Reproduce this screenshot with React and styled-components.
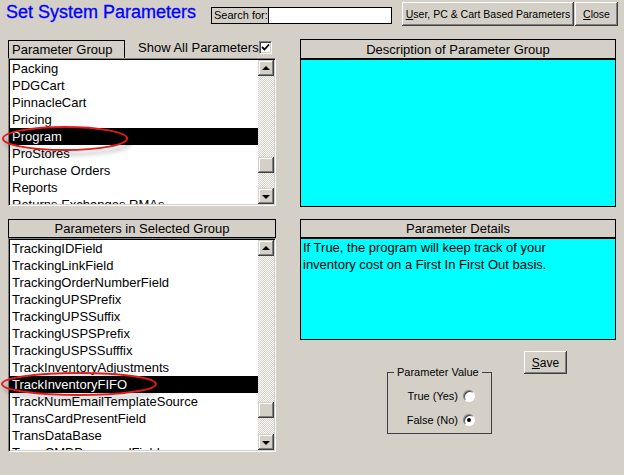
import styled, { createGlobalStyle } from 'styled-components';

const GlobalStyle = createGlobalStyle`
  html, body { margin: 0; padding: 0; background: #d4d0c8; }
  body { font-family: "Liberation Sans", Arial, sans-serif; overflow: hidden; }
`;

const Window = styled.div`
  position: relative;
  width: 624px;
  height: 475px;
  background: #d4d0c8;
  color: #000;
  font-size: 13px;
`;

const TopBar = styled.div`
  display: flex;
  align-items: flex-start;
  height: 39px;
`;

const Title = styled.h1`
  margin: 2px 0 0 6px;
  width: 205px;
  font-size: 18px;
  line-height: 21px;
  font-weight: normal;
  color: #0000ff;
  white-space: nowrap;
  -webkit-text-stroke: 0.3px #0000ff;
`;

const SearchLabel = styled.div`
  margin-top: 7px;
  width: 58px;
  height: 17px;
  box-sizing: border-box;
  border: 1px solid #000;
  font-size: 11px;
  line-height: 15px;
  padding-left: 2px;
`;

const SearchInput = styled.div`
  margin: 7px 0 0 -1px;
  width: 124px;
  height: 17px;
  box-sizing: border-box;
  border: 1px solid #000;
  background: #fff;
`;

const Button = styled.div`
  margin-top: ${p => p.$top || 2}px;
  margin-left: ${p => p.$gap || 0}px;
  width: ${p => p.$w}px;
  height: ${p => p.$h || 24}px;
  display: flex;
  align-items: center;
  justify-content: center;
  background: #d4d0c8;
  font-size: ${p => p.$size || 10.5}px;
  white-space: nowrap;
  box-shadow: inset -1px -1px #404040, inset 1px 1px #fff, inset -2px -2px #808080, inset 2px 2px #d4d0c8;

  u { text-decoration: underline; }
`;

const Main = styled.div`
  display: grid;
  grid-template-columns: 268px 316px;
  column-gap: 24px;
  padding-left: 8px;
`;

const Column = styled.div`
  display: flex;
  flex-direction: column;
`;

const GroupBar = styled.div`
  display: flex;
  align-items: flex-start;
  height: 19px;
`;

const GroupLabel = styled.div`
  margin-top: 1px;
  width: 117px;
  height: 18px;
  box-sizing: border-box;
  border: 1px solid #000;
  border-bottom: none;
  line-height: 17px;
  padding-left: 3px;
`;

const ShowAll = styled.div`
  display: flex;
  align-items: center;
  margin-left: 13px;
  height: 17px;
  white-space: nowrap;
`;

const CheckBox = styled.div`
  width: 13px;
  height: 13px;
  box-sizing: border-box;
  background: #fff;
  border: 1px solid;
  border-color: #808080 #fff #fff #808080;
  box-shadow: inset 1px 1px #404040, inset -1px -1px #d4d0c8;
  display: flex;
  align-items: center;
  justify-content: center;
`;

const ListBox = styled.div`
  height: ${p => p.$h}px;
  box-sizing: border-box;
  border: 1px solid;
  border-color: #808080 #fff #fff #808080;
  box-shadow: inset 1px 1px #000, inset -1px -1px #d4d0c8;
  padding: 1px;
  display: flex;
`;

const Items = styled.div`
  flex: 1;
  background: #fff;
  overflow: hidden;
`;

const Item = styled.div`
  height: 17px;
  line-height: 17px;
  padding-left: 2px;
  white-space: nowrap;
  background: ${p => (p.$selected ? '#000' : 'transparent')};
  color: ${p => (p.$selected ? '#fff' : '#000')};
`;

const ScrollBar = styled.div`
  width: 16px;
  display: flex;
  flex-direction: column;
`;

const ScrollButton = styled.div`
  width: 16px;
  height: 16px;
  background: #d4d0c8;
  box-shadow: inset -1px -1px #404040, inset 1px 1px #d4d0c8, inset -2px -2px #808080, inset 2px 2px #fff;
  display: flex;
  align-items: center;
  justify-content: center;
`;

const Arrow = styled.div`
  width: 0;
  height: 0;
  border-left: 4px solid transparent;
  border-right: 4px solid transparent;
  ${p => (p.$down ? 'border-top: 4px solid #000;' : 'border-bottom: 4px solid #000;')}
  margin-top: ${p => (p.$down ? 1 : -1)}px;
`;

const Track = styled.div`
  flex: 1;
  padding-top: ${p => p.$offset}px;
  background: repeating-conic-gradient(#d4d0c8 0 25%, #fff 0 50%) 0 0 / 2px 2px;
`;

const SectionHeader = styled.div`
  height: ${p => p.$h}px;
  box-sizing: border-box;
  border: 1px solid #000;
  display: flex;
  align-items: center;
  justify-content: center;
  margin-top: ${p => p.$top || 0}px;
  white-space: nowrap;
`;

const CyanBox = styled.div`
  height: ${p => p.$h}px;
  box-sizing: border-box;
  border: 1px solid #000;
  background: #00ffff;
  padding: 1px 2px;
  line-height: 16.5px;
`;

const BottomArea = styled.div`
  display: flex;
  align-items: flex-start;
  padding-left: 87px;
`;

const GroupBox = styled.fieldset`
  margin: 26px 0 0 0;
  width: 105px;
  min-width: 0;
  height: 68px;
  box-sizing: border-box;
  border: 1px solid #404040;
  padding: 10px 16px 0 0;
  font-size: 11px;
  display: flex;
  flex-direction: column;
  align-items: flex-end;
  gap: 10px;

  legend {
    margin-left: 6px;
    padding: 0 3px;
    line-height: 13px;
    white-space: nowrap;
  }
`;

const RadioRow = styled.div`
  display: flex;
  align-items: center;
  gap: 5px;
  height: 14px;
  white-space: nowrap;
`;

const Radio = styled.div`
  width: 12px;
  height: 12px;
  box-sizing: border-box;
  border-radius: 50%;
  border: 1px solid;
  border-color: #808080 #fff #fff #808080;
  box-shadow: inset 1px 1px #404040;
  background: #fff;
  display: flex;
  align-items: center;
  justify-content: center;

  &::after {
    content: '';
    width: 4px;
    height: 4px;
    border-radius: 50%;
    background: ${p => (p.$checked ? '#000' : 'transparent')};
  }
`;

const Overlay = styled.svg`
  position: absolute;
  left: 0;
  top: 0;
  pointer-events: none;
`;

const groups = [
  'Packing', 'PDGCart', 'PinnacleCart', 'Pricing', 'Program', 'ProStores',
  'Purchase Orders', 'Reports', 'Returns Exchanges RMAs',
];

const params = [
  'TrackingIDField', 'TrackingLinkField', 'TrackingOrderNumberField', 'TrackingUPSPrefix',
  'TrackingUPSSuffix', 'TrackingUSPSPrefix', 'TrackingUSPSSufffix', 'TrackInventoryAdjustments',
  'TrackInventoryFIFO', 'TrackNumEmailTemplateSource', 'TransCardPresentField', 'TransDataBase',
  'TransCMDPasswordField',
];

function List({ items, selected, height, thumb }) {
  return (
    <ListBox $h={height}>
      <Items>
        {items.map(it => (
          <Item key={it} $selected={it === selected}>{it}</Item>
        ))}
      </Items>
      <ScrollBar>
        <ScrollButton><Arrow /></ScrollButton>
        <Track $offset={thumb}><ScrollButton /></Track>
        <ScrollButton><Arrow $down /></ScrollButton>
      </ScrollBar>
    </ListBox>
  );
}

export default function App() {
  return (
    <Window>
      <GlobalStyle />
      <TopBar>
        <Title>Set System Parameters</Title>
        <SearchLabel>Search for:</SearchLabel>
        <SearchInput />
        <Button $gap={10} $w={172}><span><u>U</u>ser, PC &amp; Cart Based Parameters</span></Button>
        <Button $gap={1} $w={43}><span><u>C</u>lose</span></Button>
      </TopBar>
      <Main>
        <Column>
          <GroupBar>
            <GroupLabel>Parameter Group</GroupLabel>
            <ShowAll>
              Show All Parameters
              <CheckBox>
                <svg width="9" height="9" viewBox="0 0 9 9">
                  <path d="M1 4 L3.5 6.5 L8 1.5" fill="none" stroke="#000" strokeWidth="1.8" />
                </svg>
              </CheckBox>
            </ShowAll>
          </GroupBar>
          <List items={groups} selected="Program" height={148} thumb={81} />
          <SectionHeader $h={19} $top={13}>Parameters in Selected Group</SectionHeader>
          <List items={params} selected="TrackInventoryFIFO" height={214} thumb={146} />
        </Column>
        <Column>
          <SectionHeader $h={20}>Description of Parameter Group</SectionHeader>
          <CyanBox $h={148} />
          <SectionHeader $h={19} $top={12}>Parameter Details</SectionHeader>
          <CyanBox $h={102}>
            If True, the program will keep track of your<br />
            inventory cost on a First In First Out basis.
          </CyanBox>
          <BottomArea>
            <GroupBox>
              <legend>Parameter Value</legend>
              <RadioRow>True (Yes) <Radio /></RadioRow>
              <RadioRow>False (No) <Radio $checked /></RadioRow>
            </GroupBox>
            <Button $top={11} $gap={32} $w={43} $h={23} $size={12}><span><u>S</u>ave</span></Button>
          </BottomArea>
        </Column>
      </Main>
      <Overlay width="624" height="475">
        <defs>
          <filter id="shadow" x="-10%" y="-50%" width="130%" height="220%">
            <feDropShadow dx="3" dy="4" stdDeviation="2" floodColor="#000" floodOpacity="0.35" />
          </filter>
        </defs>
        <ellipse cx="65" cy="138.5" rx="62" ry="11.5" fill="none" stroke="#e21b1b" strokeWidth="2" filter="url(#shadow)" />
        <ellipse cx="79" cy="384" rx="77" ry="11" fill="none" stroke="#e21b1b" strokeWidth="2" filter="url(#shadow)" />
      </Overlay>
    </Window>
  );
}
